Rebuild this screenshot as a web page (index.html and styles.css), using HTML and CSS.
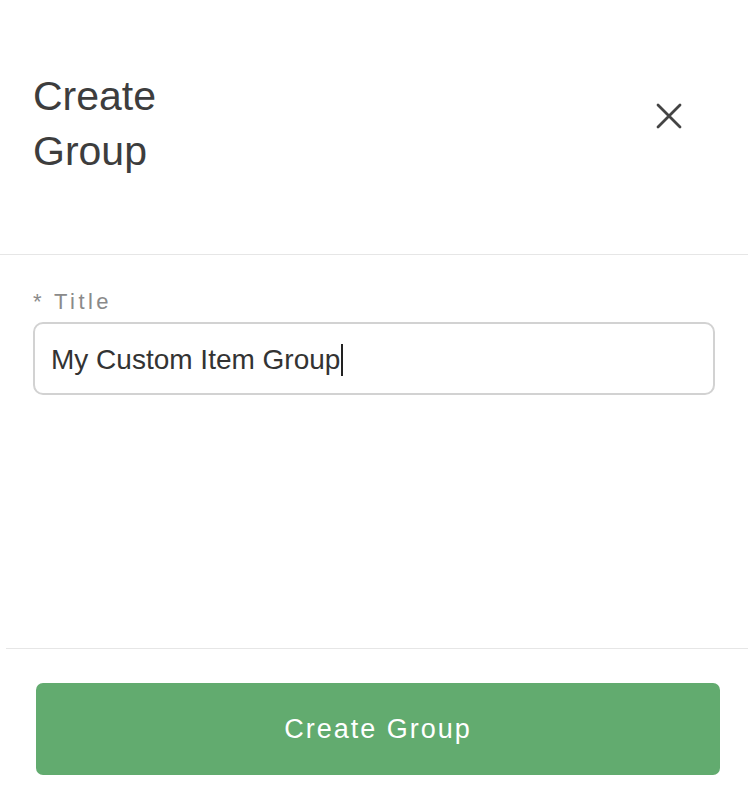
FILE: index.html
```html
<!DOCTYPE html>
<html lang="en">
<head>
    <meta charset="UTF-8">
    <meta name="viewport" content="width=device-width, initial-scale=1.0">
    <title>Create Group</title>
    <link rel="stylesheet" href="styles.css">
</head>
<body>
    <div class="sheet">
        <header class="sheet-header">
            <h1 class="sheet-title">Create Group</h1>
            <button class="close-btn" aria-label="Close">
                <svg width="26" height="26" viewBox="0 0 26 26">
                    <path d="M2 2 L24 24 M24 2 L2 24" stroke="#444" stroke-width="2.8" stroke-linecap="round" fill="none"/>
                </svg>
            </button>
        </header>

        <main class="sheet-body">
            <label class="field-label" for="groupTitle">* Title</label>
            <!-- caret drawn by hand so the focused state shows in a still picture -->
            <div class="field-input" id="groupTitle">
                <span class="field-value">My Custom Item Group</span><span class="caret"></span>
            </div>
        </main>

        <footer class="sheet-footer">
            <button class="submit-btn">Create Group</button>
        </footer>
    </div>
</body>
</html>
```

FILE: styles.css
```css
* {
    box-sizing: border-box;
}

body {
    margin: 0;
    background-color: white;
    font-family: "Liberation Sans", Arial, sans-serif;
    color: #333;
}

.sheet {
    width: 748px;
    height: 807px;
    display: flex;
    flex-direction: column;
}

.sheet-header {
    display: flex;
    justify-content: space-between;
    align-items: flex-start;
    height: 255px;
    padding: 69px 59px 0 33px;
    border-bottom: 1px solid #e6e6e6;
}

.sheet-title {
    margin: 0;
    max-width: 200px;
    font-size: 41px;
    font-weight: normal;
    line-height: 55px;
    color: #3d3d3d;
}

.close-btn {
    width: 40px;
    height: 40px;
    margin-top: 27px;
    padding: 0;
    border: none;
    background: none;
    display: flex;
    align-items: center;
    justify-content: center;
    cursor: pointer;
}

.sheet-body {
    height: 393px;
    padding: 33px 33px 0 33px;
    display: flex;
    flex-direction: column;
}

.field-label {
    font-size: 22px;
    line-height: 27px;
    letter-spacing: 3.4px;
    color: #8a8a8a;
    margin-bottom: 7px;
}

.field-input {
    width: 682px;
    height: 73px;
    border: 2px solid #d2d2d2;
    border-radius: 10px;
    padding: 3px 16px 0 16px;
    display: flex;
    align-items: center;
    font-size: 28px;
    color: #333;
}

.caret {
    display: inline-block;
    width: 1.5px;
    height: 32px;
    margin-left: 1px;
    background-color: #222;
}

.sheet-footer {
    margin-left: 6px;
    border-top: 1px solid #e6e6e6;
    padding: 34px 28px 0 30px;
}

.submit-btn {
    width: 684px;
    height: 92px;
    border: none;
    border-radius: 7px;
    background-color: #62ab6f;
    color: white;
    font-family: "Liberation Sans", Arial, sans-serif;
    font-size: 27px;
    letter-spacing: 2px;
    cursor: pointer;
}
```
